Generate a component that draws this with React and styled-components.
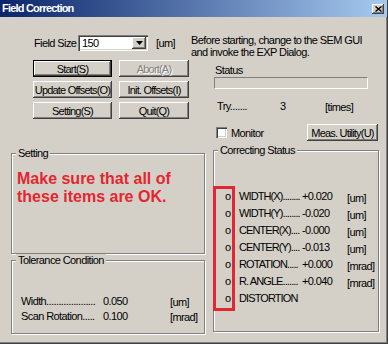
import React from 'react';
import styled, { createGlobalStyle } from 'styled-components';

const Global = createGlobalStyle`
  html, body { margin: 0; padding: 0; background: #d4d0c8; overflow: hidden; }
  body {
    font-family: "Liberation Sans", Arial, sans-serif;
    font-size: 11px;
    letter-spacing: -0.6px;
    color: #000;
  }
  * { box-sizing: border-box; }
`;

const raised = `
  background: #d4d0c8;
  box-shadow: inset -1px -1px #404040, inset 1px 1px #ffffff, inset -2px -2px #808080, inset 2px 2px #d4d0c8;
`;
const sunken = `
  box-shadow: inset 1px 1px #808080, inset 2px 2px #404040, inset -1px -1px #ffffff, inset -2px -2px #d4d0c8;
`;

const Window = styled.div`
  width: 388px;
  height: 344px;
  display: flex;
  flex-direction: column;
  background: #d4d0c8;
  border-right: 1px solid #404040;
  border-bottom: 1px solid #404040;
  box-shadow: inset -1px -1px #808080;
`;

const TitleBar = styled.div`
  height: 17px;
  flex: none;
  display: flex;
  align-items: center;
  padding: 0 3px 0 2px;
  background: linear-gradient(to right, #0a246a, #a6caf0);
`;

const Title = styled.span`
  color: #fff;
  font-weight: bold;
  font-size: 11px;
  letter-spacing: -0.8px;
  line-height: 17px;
`;

const CloseBtn = styled.div`
  margin-left: auto;
  width: 12px;
  height: 10px;
  display: flex;
  align-items: center;
  justify-content: center;
  ${raised}
`;

const Body = styled.div`
  flex: 1;
  display: flex;
  flex-direction: column;
  padding: 17px 8px 0 11px;
`;

const Top = styled.div`
  display: flex;
`;

const LeftTop = styled.div`
  margin-left: 22px;
  width: 158px;
  padding-top: 1px;
`;

const FieldRow = styled.div`
  display: flex;
  align-items: center;
  height: 16px;
`;

const FieldLabel = styled.span`
  width: 45px;
  padding-left: 1px;
`;

const Combo = styled.div`
  width: 70px;
  height: 16px;
  display: flex;
  align-items: center;
  padding: 0 2px 0 4px;
  background: #fff;
  ${sunken}
`;

const DropBtn = styled.div`
  margin-left: auto;
  width: 14px;
  height: 12px;
  display: flex;
  align-items: center;
  justify-content: center;
  ${raised}
`;

const Unit = styled.span`
  margin-left: ${p => p.$ml || 0}px;
  margin-top: ${p => p.$mt || 0}px;
`;

const ButtonGrid = styled.div`
  margin-top: 9px;
  display: grid;
  grid-template-columns: 79px 70px;
  grid-auto-rows: 17px;
  column-gap: 7px;
  row-gap: 4px;
`;

const Button = styled.div`
  display: flex;
  align-items: center;
  justify-content: center;
  width: ${p => p.$w ? p.$w + 'px' : 'auto'};
  height: 17px;
  white-space: nowrap;
  letter-spacing: -0.8px;
  color: ${p => p.$disabled ? '#808080' : '#000'};
  text-shadow: ${p => p.$disabled ? '1px 1px #fff' : 'none'};
  ${raised}
  ${p => p.$default ? `
    border: 1px solid #000;
    box-shadow: inset -1px -1px #404040, inset 1px 1px #ffffff, inset -2px -2px #808080;
  ` : ''}
`;

const MeasButton = styled(Button)`
  margin-left: auto;
  margin-right: 1px;
`;

const RightTop = styled.div`
  flex: 1;
  display: flex;
  flex-direction: column;
`;

const Info = styled.div`
  line-height: 12px;
`;

const StatusLabel = styled.div`
  margin-top: 6px;
  padding-left: 24px;
  line-height: 12px;
`;

const StatusBar = styled.div`
  margin: 1px 0 0 23px;
  width: 154px;
  height: 12px;
  border-top: 1px solid #808080;
  border-left: 1px solid #808080;
  border-right: 1px solid #fff;
  border-bottom: 1px solid #fff;
`;

const TryRow = styled.div`
  margin-top: 11px;
  padding-left: 26px;
  display: flex;
  line-height: 12px;
`;

const Cell = styled.span`
  width: ${p => p.$w}px;
  flex: none;
  white-space: nowrap;
`;

const MonitorRow = styled.div`
  margin-top: 11px;
  display: flex;
  align-items: center;
  height: 17px;
`;

const Checkbox = styled.div`
  margin-left: 25px;
  width: 11px;
  height: 11px;
  background: #fff;
  ${sunken}
`;

const CheckLabel = styled.span`
  margin-left: 4px;
`;

const Bottom = styled.div`
  margin-top: 9px;
  display: flex;
  gap: 8px;
`;

const LeftCol = styled.div`
  width: 194px;
  padding-top: 3px;
  display: flex;
  flex-direction: column;
  gap: 6px;
`;

const Group = styled.div`
  position: relative;
  height: ${p => p.$h}px;
  flex: ${p => p.$grow ? 1 : 'none'};
  border: 1px solid #808080;
  box-shadow: inset 1px 1px #fff, 1px 1px #fff;
`;

const GroupLabel = styled.span`
  position: absolute;
  top: -7px;
  left: 4px;
  padding: 0 2px;
  line-height: 12px;
  background: #d4d0c8;
  white-space: nowrap;
`;

const Note = styled.div`
  padding: 16px 0 0 5px;
  color: #e3262f;
  font-size: 16px;
  font-weight: bold;
  line-height: 18px;
  letter-spacing: 0;
`;

const TolGrid = styled.div`
  padding: 33px 0 0 9px;
  display: grid;
  grid-template-columns: 82px 67px auto;
  grid-auto-rows: 15px;
  line-height: 15px;
  white-space: nowrap;
`;

const CorrGrid = styled.div`
  padding: 37px 0 0 11px;
  display: grid;
  grid-template-columns: 14px 63px 45px auto;
  grid-auto-rows: 17px;
  line-height: 17px;
  white-space: nowrap;
`;

const RowLabel = styled.span`
  letter-spacing: -0.9px;
`;

const Low = styled.span`
  margin-top: ${p => p.$mt || 2}px;
`;

const Highlight = styled.div`
  position: absolute;
  left: -1px;
  top: 35px;
  width: 22px;
  height: 125px;
  border: 3px solid #e3262f;
`;

const rows = [
  ['WIDTH(X)........', '+0.020', '[um]'],
  ['WIDTH(Y)........', '-0.020', '[um]'],
  ['CENTER(X)....', '-0.000', '[um]'],
  ['CENTER(Y)....', '-0.013', '[um]'],
  ['ROTATION.....', '+0.000', '[mrad]'],
  ['R. ANGLE.......', '+0.040', '[mrad]'],
  ['DISTORTION', '', ''],
];

export default function App() {
  return (
    <>
      <Global />
      <Window>
        <TitleBar>
          <Title>Field Correction</Title>
          <CloseBtn>
            <svg width="7" height="6" viewBox="0 0 7 6">
              <path d="M0.5 0.5 L6.5 5.5 M6.5 0.5 L0.5 5.5" stroke="#000" strokeWidth="1.4" fill="none" />
            </svg>
          </CloseBtn>
        </TitleBar>
        <Body>
          <Top>
            <LeftTop>
              <FieldRow>
                <FieldLabel>Field Size</FieldLabel>
                <Combo>
                  <span>150</span>
                  <DropBtn>
                    <svg width="7" height="4" viewBox="0 0 7 4">
                      <polygon points="0,0 7,0 3.5,4" fill="#000" />
                    </svg>
                  </DropBtn>
                </Combo>
                <Unit $ml={8}>[um]</Unit>
              </FieldRow>
              <ButtonGrid>
                <Button $default>Start(S)</Button>
                <Button $disabled>Abort(A)</Button>
                <Button>Update Offsets(O)</Button>
                <Button>Init. Offsets(I)</Button>
                <Button>Setting(S)</Button>
                <Button>Quit(Q)</Button>
              </ButtonGrid>
            </LeftTop>
            <RightTop>
              <Info>
                Before starting, change to the SEM GUI<br />
                and invoke the EXP Dialog.
              </Info>
              <StatusLabel>Status</StatusLabel>
              <StatusBar />
              <TryRow>
                <Cell $w={63}>Try.......</Cell>
                <Cell $w={45}>3</Cell>
                <Unit $mt={1}>[times]</Unit>
              </TryRow>
              <MonitorRow>
                <Checkbox />
                <CheckLabel>Monitor</CheckLabel>
                <MeasButton $w={71}>Meas. Utility(U)</MeasButton>
              </MonitorRow>
            </RightTop>
          </Top>
          <Bottom>
            <LeftCol>
              <Group $h={101}>
                <GroupLabel>Setting</GroupLabel>
                <Note>
                  Make sure that all of<br />
                  these items are OK.
                </Note>
              </Group>
              <Group $h={74}>
                <GroupLabel>Tolerance Condition</GroupLabel>
                <TolGrid>
                  <span>Width....................</span>
                  <span>0.050</span>
                  <Low $mt={1}>[um]</Low>
                  <span>Scan Rotation.....</span>
                  <span>0.100</span>
                  <Low $mt={1}>[mrad]</Low>
                </TolGrid>
              </Group>
            </LeftCol>
            <Group $h={182} $grow>
              <GroupLabel>Correcting Status</GroupLabel>
              <CorrGrid>
                {rows.map(([label, value, unit]) => (
                  <React.Fragment key={label}>
                    <span>o</span>
                    <RowLabel>{label}</RowLabel>
                    <span>{value}</span>
                    <Low>{unit}</Low>
                  </React.Fragment>
                ))}
              </CorrGrid>
              <Highlight />
            </Group>
          </Bottom>
        </Body>
      </Window>
    </>
  );
}
